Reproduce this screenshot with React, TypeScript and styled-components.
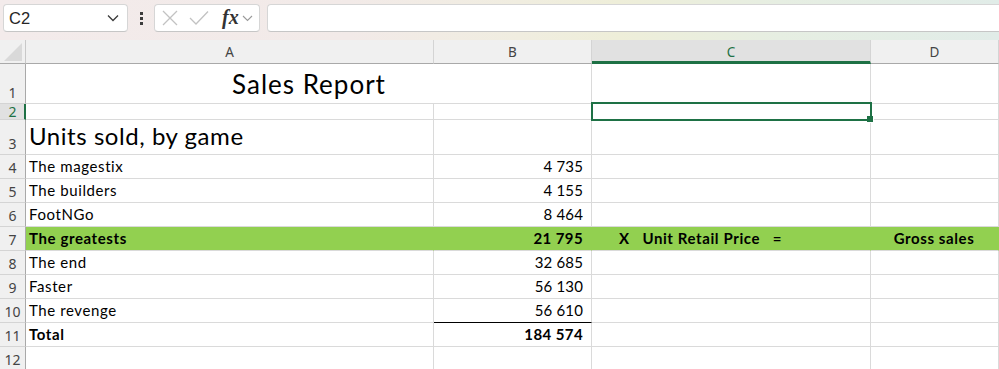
import React from "react";
import styled, { createGlobalStyle } from "styled-components";

const GlobalStyle = createGlobalStyle`
  html, body {
    margin: 0;
    padding: 0;
    background: #ffffff;
    overflow: hidden;
  }
  * {
    box-sizing: border-box;
  }
`;

const GRID = "#dadada";
const GREEN = "#1e7145";
const FILL = "#92d050";

type CellDef = {
  text?: string;
  align?: "left" | "right" | "center";
  bold?: boolean;
  size?: number;
  spacing?: number;
  span?: number;
  fill?: boolean;
  underline?: boolean;
  selected?: boolean;
  indent?: number;
};

type RowDef = {
  n: number;
  cells: CellDef[];
};

const num = (text: string, bold = false): CellDef => ({
  text,
  align: "right",
  bold,
  spacing: bold ? 0.4 : 0.15,
});

const rows: RowDef[] = [
  {
    n: 1,
    cells: [{ text: "Sales Report", align: "center", size: 26, spacing: 1, span: 2, indent: 9 }, {}, {}],
  },
  { n: 2, cells: [{}, {}, { selected: true }, {}] },
  { n: 3, cells: [{ text: "Units sold, by game", size: 24, spacing: 0.55 }, {}, {}, {}] },
  { n: 4, cells: [{ text: "The magestix" }, num("4 735"), {}, {}] },
  { n: 5, cells: [{ text: "The builders" }, num("4 155"), {}, {}] },
  { n: 6, cells: [{ text: "FootNGo" }, num("8 464"), {}, {}] },
  {
    n: 7,
    cells: [
      { text: "The greatests", bold: true, fill: true },
      { ...num("21 795", true), fill: true },
      { text: "X   Unit Retail Price   =", bold: true, fill: true, indent: 27 },
      { text: "Gross sales", align: "center", bold: true, fill: true, indent: 7 },
      { fill: true },
    ],
  },
  { n: 8, cells: [{ text: "The end" }, num("32 685"), {}, {}] },
  { n: 9, cells: [{ text: "Faster" }, num("56 130"), {}, {}] },
  { n: 10, cells: [{ text: "The revenge" }, { ...num("56 610"), underline: true }, {}, {}] },
  { n: 11, cells: [{ text: "Total", bold: true }, num("184 574", true), {}, {}] },
  { n: 12, cells: [{}, {}, {}, {}] },
];

const columns = ["A", "B", "C", "D"];

const App = () => {
  return (
    <>
      <GlobalStyle />
      <Page>
        <Toolbar>
          <NameBox>
            <span>C2</span>
            <svg width="12" height="8" viewBox="0 0 12 8">
              <path d="M1 1.5 L6 6.5 L11 1.5" fill="none" stroke="#3a3a3a" strokeWidth="1.3" />
            </svg>
          </NameBox>
          <Dots>
            <i />
            <i />
            <i />
          </Dots>
          <FormulaButtons>
            <svg width="16" height="16" viewBox="0 0 16 16">
              <path d="M1 1 L15 15 M15 1 L1 15" stroke="#c2c2c2" strokeWidth="1.3" fill="none" />
            </svg>
            <svg width="20" height="16" viewBox="0 0 20 16">
              <path d="M1 8 L7 14 L19 1.5" stroke="#c2c2c2" strokeWidth="1.3" fill="none" />
            </svg>
            <Fx>fx</Fx>
            <svg width="11" height="7" viewBox="0 0 11 7">
              <path d="M1 1 L5.5 5.5 L10 1" fill="none" stroke="#9a9a9a" strokeWidth="1.1" />
            </svg>
          </FormulaButtons>
          <FormulaInput />
        </Toolbar>

        <Sheet>
          <Corner>
            <svg width="18" height="18" viewBox="0 0 18 18">
              <path d="M18 0 L18 18 L0 18 Z" fill="#d9d9d9" />
            </svg>
          </Corner>
          {columns.map((c) => (
            <ColHead key={c} $active={c === "C"}>
              {c}
            </ColHead>
          ))}
          <ColHead $active={false} />

          {rows.map((r) => (
            <React.Fragment key={r.n}>
              <RowHead $active={r.n === 2}>{r.n}</RowHead>
              {r.cells.map((cell, i) => (
                <Cell
                  key={i}
                  $align={cell.align || "left"}
                  $bold={!!cell.bold}
                  $size={cell.size || 15}
                  $spacing={cell.spacing ?? 0.6}
                  $span={cell.span || 1}
                  $fill={!!cell.fill}
                  $underline={!!cell.underline}
                  $indent={cell.indent || 3}
                >
                  {cell.text}
                  {cell.selected && (
                    <Selection>
                      <Handle />
                    </Selection>
                  )}
                </Cell>
              ))}
              {r.cells.length < 5 && (
                <Cell
                  $align="left"
                  $bold={false}
                  $size={15}
                  $spacing={0}
                  $span={1}
                  $fill={false}
                  $underline={false}
                  $indent={3}
                />
              )}
            </React.Fragment>
          ))}
        </Sheet>
      </Page>
    </>
  );
};

export default App;

const Page = styled.div`
  width: 999px;
  height: 369px;
  overflow: hidden;
  background: #ffffff;
`;

const Toolbar = styled.div`
  height: 40px;
  display: flex;
  align-items: flex-start;
  padding: 4px 0 0 3px;
  background: linear-gradient(
    90deg,
    #f3ebeb 0%,
    #f2eae8 35%,
    #f0ede0 52%,
    #eeeed9 62%,
    #e6eee2 78%,
    #e1ece8 100%
  );
`;

const NameBox = styled.div`
  width: 125px;
  height: 28px;
  background: #ffffff;
  border: 1px solid #d6d6d6;
  border-bottom-color: #c6c6c6;
  border-radius: 4px;
  display: flex;
  align-items: center;
  justify-content: space-between;
  padding: 0 8px 0 5px;
  font-family: "Liberation Sans", "Noto Sans", sans-serif;
  font-size: 16.5px;
  color: #262626;
`;

const Dots = styled.div`
  width: 26px;
  height: 28px;
  display: flex;
  flex-direction: column;
  align-items: center;
  justify-content: center;
  gap: 2px;

  i {
    display: block;
    width: 3px;
    height: 3px;
    background: #3c3c3c;
  }
`;

const FormulaButtons = styled.div`
  width: 106px;
  height: 28px;
  background: #ffffff;
  border: 1px solid #d6d6d6;
  border-bottom-color: #c6c6c6;
  border-radius: 4px;
  display: flex;
  align-items: center;
  padding: 0 4px 0 7px;
  gap: 11px;

  svg:last-child {
    margin-left: -8px;
  }
`;

const Fx = styled.span`
  font-family: "Liberation Serif", "DejaVu Serif", serif;
  font-style: italic;
  font-weight: 700;
  font-size: 20px;
  color: #333333;
  line-height: 1;
  margin-top: -3px;
  margin-left: 2px;
`;

const FormulaInput = styled.div`
  flex: 1;
  height: 28px;
  margin-left: 7px;
  background: #ffffff;
  border: 1px solid #d6d6d6;
  border-bottom-color: #c6c6c6;
  border-right: none;
  border-radius: 4px 0 0 4px;
`;

const Sheet = styled.div`
  display: grid;
  grid-template-columns: 26px 408px 158px 279px 128px 1fr;
  grid-template-rows: 24px 40px 16px 35px repeat(9, 24px);
  font-family: "Lato", "Carlito", "Liberation Sans", sans-serif;
  color: #000000;
`;

const Corner = styled.div`
  background: #f0f0f0;
  border-right: 1px solid #c8c8c8;
  border-bottom: 1px solid #a9a9a9;
  display: flex;
  align-items: flex-end;
  justify-content: flex-end;
  padding: 0 3px 2px 0;
`;

const ColHead = styled.div<{ $active: boolean }>`
  background: ${(p) => (p.$active ? "#e1e1e1" : "#f0f0f0")};
  border-right: 1px solid #d4d4d4;
  border-bottom: ${(p) => (p.$active ? `3px solid ${GREEN}` : "1px solid #a9a9a9")};
  display: flex;
  align-items: center;
  justify-content: center;
  padding-top: ${(p) => (p.$active ? "2px" : "0")};
  font-family: "Noto Sans", "Liberation Sans", sans-serif;
  font-size: 13.5px;
  color: ${(p) => (p.$active ? GREEN : "#444444")};
`;

const RowHead = styled.div<{ $active: boolean }>`
  background: ${(p) => (p.$active ? "#e1e1e1" : "#f0f0f0")};
  border-right: ${(p) => (p.$active ? `2px solid ${GREEN}` : "1px solid #a9a9a9")};
  border-bottom: 1px solid #d4d4d4;
  display: flex;
  align-items: ${(p) => (p.$active ? "center" : "flex-end")};
  justify-content: center;
  padding-bottom: ${(p) => (p.$active ? "0" : "2px")};
  padding-left: ${(p) => (p.$active ? "1px" : "0")};
  line-height: ${(p) => (p.$active ? "14px" : "16px")};
  font-family: "Noto Sans", "Liberation Sans", sans-serif;
  font-size: 14px;
  color: ${(p) => (p.$active ? GREEN : "#444444")};
`;

const Cell = styled.div<{
  $align: "left" | "right" | "center";
  $bold: boolean;
  $size: number;
  $spacing: number;
  $span: number;
  $fill: boolean;
  $underline: boolean;
  $indent: number;
}>`
  position: relative;
  grid-column: span ${(p) => p.$span};
  background: ${(p) => (p.$fill ? FILL : "#ffffff")};
  border-right: 1px solid ${(p) => (p.$fill ? FILL : GRID)};
  border-bottom: 1px solid ${(p) => (p.$underline ? "#000000" : GRID)};
  display: flex;
  align-items: flex-end;
  justify-content: ${(p) =>
    p.$align === "right" ? "flex-end" : p.$align === "center" ? "center" : "flex-start"};
  padding: 0 8px 3px ${(p) => p.$indent}px;
  white-space: pre;
  font-size: ${(p) => p.$size}px;
  font-weight: ${(p) => (p.$bold ? 700 : 400)};
  letter-spacing: ${(p) => p.$spacing}px;
  line-height: 1.2;
`;

const Selection = styled.div`
  position: absolute;
  z-index: 2;
  left: -1px;
  top: -2px;
  right: -2px;
  bottom: -2px;
  border: 2px solid ${GREEN};
  pointer-events: none;
`;

const Handle = styled.div`
  position: absolute;
  right: -4px;
  bottom: -4px;
  width: 7px;
  height: 7px;
  background: ${GREEN};
  border: 1px solid #ffffff;
  border-top: none;
  border-left: none;
`;
